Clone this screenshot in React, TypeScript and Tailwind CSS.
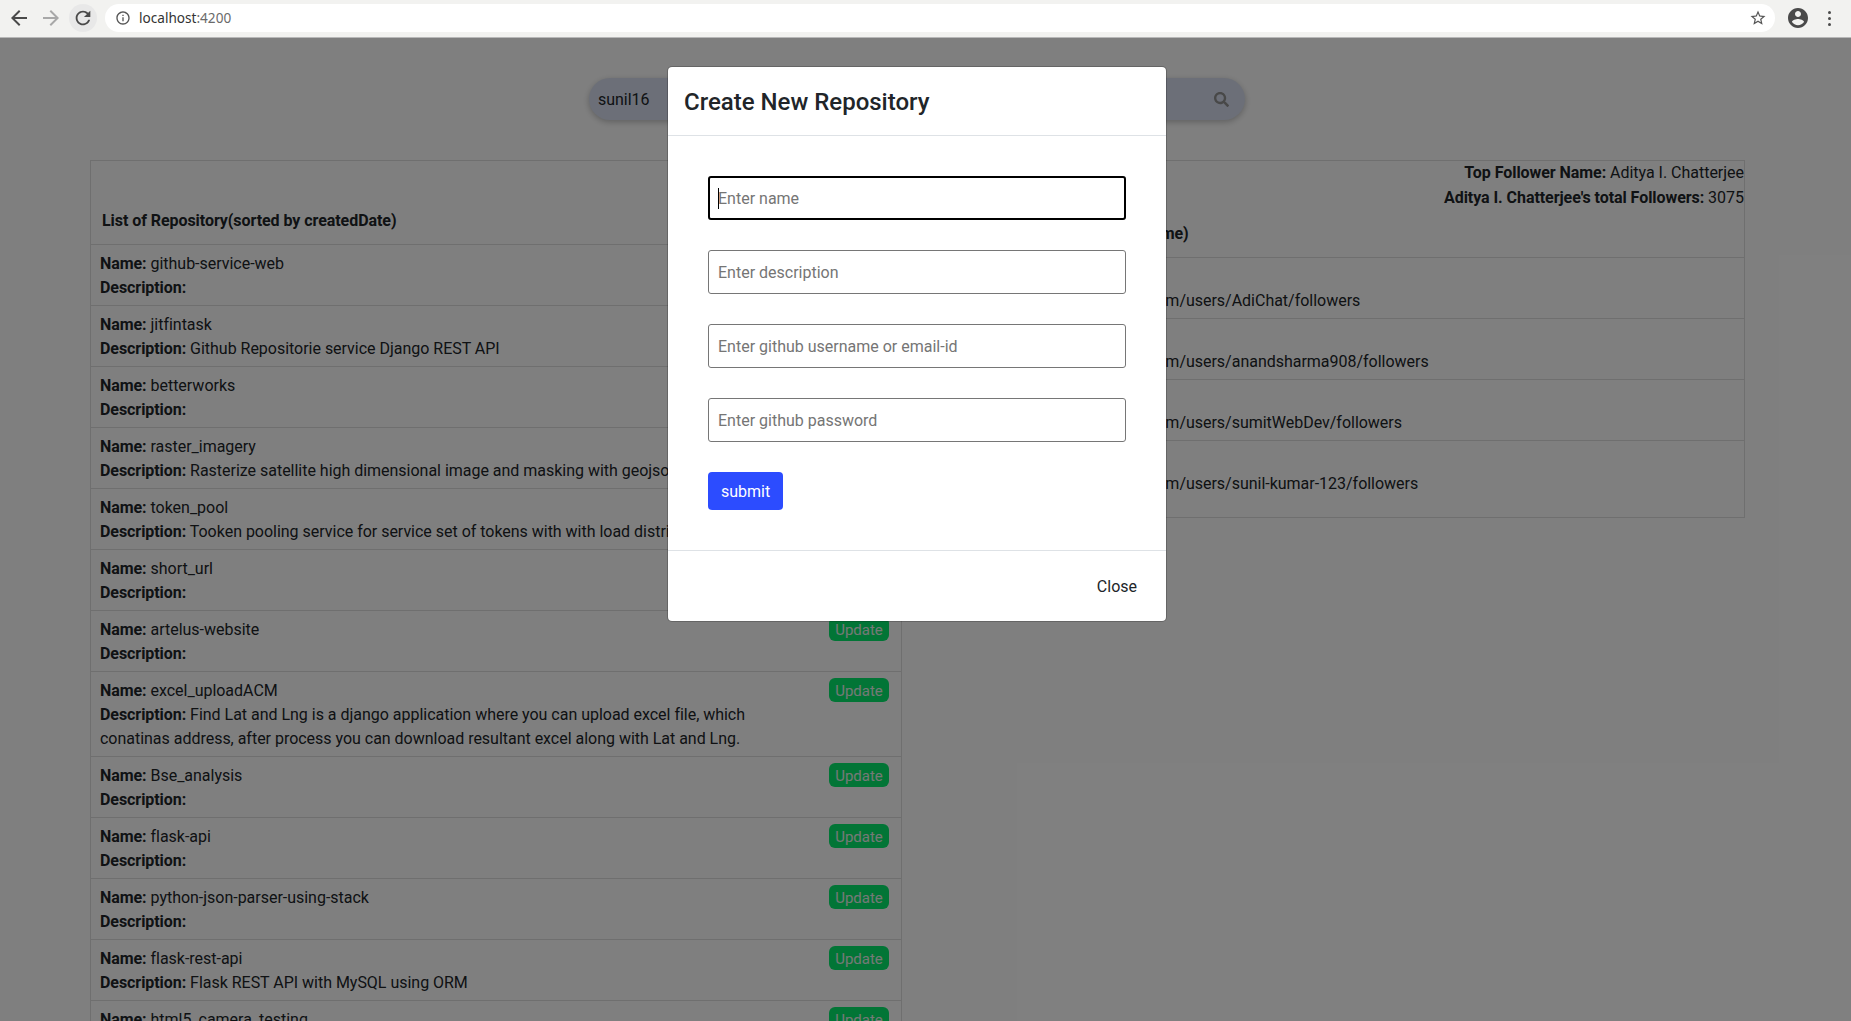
import React from "react";
import { FaSearch } from "react-icons/fa";

const repos: { name: string; desc?: string }[] = [
  { name: "github-service-web" },
  { name: "jitfintask", desc: "Github Repositorie service Django REST API" },
  { name: "betterworks" },
  { name: "raster_imagery", desc: "Rasterize satellite high dimensional image and masking with geojson" },
  { name: "token_pool", desc: "Tooken pooling service for service set of tokens with with load distribution" },
  { name: "short_url" },
  { name: "artelus-website" },
  {
    name: "excel_uploadACM",
    desc: "Find Lat and Lng is a django application where you can upload excel file, which conatinas address, after process you can download resultant excel along with Lat and Lng.",
  },
  { name: "Bse_analysis" },
  { name: "flask-api" },
  { name: "python-json-parser-using-stack" },
  { name: "flask-rest-api", desc: "Flask REST API with MySQL using ORM" },
  { name: "html5_camera_testing" },
];

const followers = [
  { name: "Aditya I. Chatterjee", user: "AdiChat" },
  { name: "Anand Sharma", user: "anandsharma908" },
  { name: "Sumit", user: "sumitWebDev" },
  { name: "Sunil Kumar", user: "sunil-kumar-123" },
];

function Icon({ d, className }: { d: string; className: string }) {
  return (
    <svg viewBox="0 0 24 24" className={className} fill="currentColor">
      <path d={d} />
    </svg>
  );
}

function Strong({ children }: { children: React.ReactNode }) {
  return <b className="font-bold tracking-[-0.06px]">{children}</b>;
}

function BrowserBar() {
  return (
    <div className="h-[38px] shrink-0 flex items-start bg-[#f2f2f0] border-b border-[#b8b8b8] pt-[4px] font-['Noto_Sans',sans-serif]">
      <div className="w-[102px] h-[28px] flex items-center pl-[7px] shrink-0">
        <Icon d="M20 11H7.83l5.59-5.59L12 4l-8 8 8 8 1.41-1.41L7.83 13H20v-2z" className="w-[24px] h-[24px] text-[#4a4a4a]" />
        <Icon d="M20 11H7.83l5.59-5.59L12 4l-8 8 8 8 1.41-1.41L7.83 13H20v-2z" className="w-[24px] h-[24px] text-[#a8a8a8] ml-[8px] rotate-180" />
        <div className="w-[28px] h-[28px] rounded-full bg-[#e8e8e8] ml-[6px] flex items-center justify-center">
          <Icon
            d="M17.65 6.35C16.2 4.9 14.21 4 12 4c-4.42 0-7.99 3.58-7.99 8s3.57 8 7.99 8c3.73 0 6.84-2.55 7.73-6h-2.08c-.82 2.33-3.04 4-5.65 4-3.31 0-6-2.69-6-6s2.69-6 6-6c1.66 0 3.14.69 4.22 1.78L13 11h7V4l-2.35 2.35z"
            className="w-[22px] h-[22px] text-[#4a4a4a]"
          />
        </div>
      </div>
      <div className="ml-[3px] w-[1670px] h-[28px] bg-white rounded-[14px] flex items-center pl-[10px] pr-[8px]">
        <Icon
          d="M11 7h2v2h-2V7zm0 4h2v6h-2v-6zm1-9C6.48 2 2 6.48 2 12s4.48 10 10 10 10-4.48 10-10S17.52 2 12 2zm0 18c-4.41 0-8-3.59-8-8s3.59-8 8-8 8 3.59 8 8-3.59 8-8 8z"
          className="w-[16px] h-[16px] text-[#555]"
        />
        <span className="ml-[8px] text-[13.6px] text-[#333]">
          localhost<span className="text-[#6a6a6a]">:4200</span>
        </span>
        <Icon
          d="M22 9.24l-7.19-.62L12 2 9.19 8.63 2 9.24l5.46 4.73L5.82 21 12 17.27 18.18 21l-1.63-7.03L22 9.24zM12 15.4l-3.76 2.27 1-4.28-3.32-2.88 4.38-.38L12 6.1l1.71 4.04 4.38.38-3.32 2.88 1 4.28L12 15.4z"
          className="w-[18px] h-[18px] text-[#555] ml-auto"
        />
      </div>
      <div className="flex items-center h-[28px] ml-[11px]">
        <Icon
          d="M12 2C6.48 2 2 6.48 2 12s4.48 10 10 10 10-4.48 10-10S17.52 2 12 2zm0 3c1.66 0 3 1.34 3 3s-1.34 3-3 3-3-1.34-3-3 1.34-3 3-3zm0 14.2c-2.5 0-4.71-1.28-6-3.22.03-1.99 4-3.08 6-3.08 1.99 0 5.97 1.09 6 3.08-1.29 1.94-3.5 3.22-6 3.22z"
          className="w-[24px] h-[24px] text-[#4a4a4a]"
        />
        <div className="ml-[18px] flex flex-col gap-[3px]">
          <span className="w-[3px] h-[3px] rounded-full bg-[#4a4a4a]" />
          <span className="w-[3px] h-[3px] rounded-full bg-[#4a4a4a]" />
          <span className="w-[3px] h-[3px] rounded-full bg-[#4a4a4a]" />
        </div>
      </div>
    </div>
  );
}

function Modal() {
  const fields = ["Enter description", "Enter github username or email-id", "Enter github password"];
  return (
    <div className="absolute left-[667px] top-[28px] w-[500px] bg-white bg-clip-padding border border-black/20 rounded-[5px] text-[#212529] tracking-normal">
      <div className="h-[69px] border-b border-[#dee2e6] px-[16px] flex items-center">
        <h4 className="text-[24px] leading-[36px] font-medium pt-[2px]">Create New Repository</h4>
      </div>
      <div className="p-[40px] flex flex-col gap-[30px]">
        <div className="relative">
          <input
            readOnly
            placeholder="Enter name"
            className="w-full h-[44px] border-2 border-black rounded-[3px] px-[8px] text-[16px] outline-none caret-transparent placeholder:text-[#757575]"
          />
          <span className="absolute left-[10px] top-[12px] w-px h-[21px] bg-black" />
        </div>
        {fields.map((f) => (
          <input
            key={f}
            readOnly
            placeholder={f}
            className="w-full h-[44px] border border-[#767676] rounded-[3px] px-[9px] text-[16px] outline-none placeholder:text-[#757575]"
          />
        ))}
        <button className="self-start h-[38px] w-[75px] rounded-[4px] bg-[#2c4cff] text-white text-[16px] pt-[2px]">submit</button>
      </div>
      <div className="h-[71px] border-t border-[#dee2e6] flex items-center justify-end pl-[16px] pr-[17px]">
        <button className="px-[12px] h-[38px] text-[16px] text-[#212529] pt-[2px]">Close</button>
      </div>
    </div>
  );
}

export default function App() {
  return (
    <div className="h-[1021px] overflow-hidden flex flex-col bg-white font-['Roboto',sans-serif] text-[16px] leading-[24px] text-[#212529]">
      <BrowserBar />
      <div className="relative flex-1 overflow-hidden tracking-[-0.02px]">
        <div className="pt-[40px] pl-[90px] pr-[106px]">
          <div className="ml-[499px] w-[656px] h-[42px] rounded-[21px] bg-[#d8dff0] shadow-[0_2px_6px_rgba(0,0,0,0.25)] flex items-center justify-between pl-[9px] pr-[16px]">
            <span className="pt-[2px]">sunil16</span>
            <FaSearch className="w-[15px] h-[15px] text-[#909090]" />
          </div>
          <div className="flex items-start gap-[23px] mt-[40px]">
            <div className="w-[812px] shrink-0 border border-black/[.125]">
              <div className="h-[84px] flex items-end pl-[11px] pb-[11px] font-bold tracking-[-0.06px] border-b border-black/[.125]">
                List of Repository(sorted by createdDate)
              </div>
              {repos.map((r) => (
                <div key={r.name} className="flex items-start justify-between pl-[9px] pr-[12px] pt-[7px] pb-[5px] border-b border-black/[.125]">
                  <div className="w-[660px]">
                    <div>
                      <Strong>Name:</Strong> {r.name}
                    </div>
                    <div>
                      <Strong>Description:</Strong> {r.desc}
                    </div>
                  </div>
                  <span className="-mt-px w-[60px] h-[24px] rounded-[6px] bg-[#04ea6c] text-[#e8f4ec] text-[15px] pt-[2px] flex items-center justify-center">Update</span>
                </div>
              ))}
            </div>
            <div className="flex-1 border border-black/[.125]">
              <div className="h-[97px] border-b border-black/[.125] flex flex-col">
                <div className="text-right">
                  <Strong>Top Follower Name:</Strong> Aditya I. Chatterjee
                </div>
                <div className="text-right pt-px">
                  <Strong>Aditya I. Chatterjee's total Followers:</Strong> 3075
                </div>
                <div className="font-bold tracking-[-0.06px] pl-[23px] mt-[12px]">List of Followers(sorted by name)</div>
              </div>
              {followers.map((f, i) => (
                <div key={f.user} className={`pl-[2px] pt-[7px] ${i === 3 ? "pb-[21px]" : "pb-[5px] border-b border-black/[.125]"}`}>
                  <div>
                    <Strong>Name:</Strong> {f.name}
                  </div>
                  <div>
                    <Strong>Follower Url:</Strong> https://api.github.com/users/{f.user}/followers
                  </div>
                </div>
              ))}
            </div>
          </div>
        </div>
        <div className="absolute inset-0 bg-black/50" />
        <Modal />
      </div>
    </div>
  );
}
